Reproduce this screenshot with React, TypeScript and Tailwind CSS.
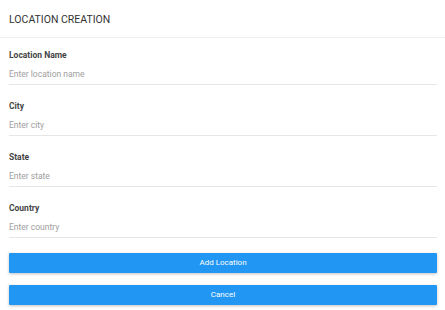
import React, { useState } from 'react';

const fields = [
  { key: 'name', label: 'Location Name', placeholder: 'Enter location name' },
  { key: 'city', label: 'City', placeholder: 'Enter city' },
  { key: 'state', label: 'State', placeholder: 'Enter state' },
  { key: 'country', label: 'Country', placeholder: 'Enter country' },
];

export default function App() {
  const [values, setValues] = useState<Record<string, string>>({});

  return (
    <div className="w-[445px] h-[310px] bg-white font-['Roboto',sans-serif] text-[#333]">
      {/* Header */}
      <div className="h-[38px] flex items-center px-[9px] pt-[3px] border-b border-[#eeeeee]">
        <h1 className="text-[10.5px] font-normal text-[#333]">LOCATION CREATION</h1>
      </div>

      {/* Form */}
      <form className="px-[9px] pt-[11px] pr-[8px]" onSubmit={(e) => e.preventDefault()}>
        {fields.map((f) => (
          <div key={f.key} className="flex flex-col mb-[15px]">
            <label className="h-[12px] leading-[12px] text-[8.5px] font-bold text-[#444]">{f.label}</label>
            <input
              type="text"
              placeholder={f.placeholder}
              value={values[f.key] ?? ''}
              onChange={(e) => setValues({ ...values, [f.key]: e.target.value })}
              className="mt-[2px] h-[22px] text-[8.5px] text-[#333] placeholder:text-[#9e9e9e] border-b border-[#e6e6e6] outline-none bg-transparent"
            />
          </div>
        ))}

        <div className="flex flex-col gap-[12px]">
          <button
            type="submit"
            className="h-[20px] w-full bg-[#2196f3] text-white text-[8px] rounded-[1px] shadow-[0_1px_3px_rgba(0,0,0,0.25)]"
          >
            Add Location
          </button>
          <button
            type="button"
            className="h-[20px] w-full bg-[#2196f3] text-white text-[8px] rounded-[1px] shadow-[0_1px_3px_rgba(0,0,0,0.25)]"
          >
            Cancel
          </button>
        </div>
      </form>
    </div>
  );
}
